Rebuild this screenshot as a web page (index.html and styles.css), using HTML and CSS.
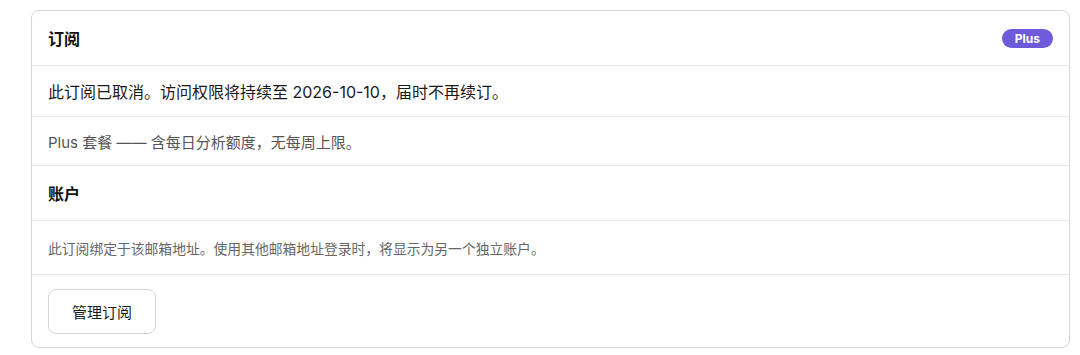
FILE: index.html
```html
<!DOCTYPE html>
<html lang="zh-CN">
<head>
    <meta charset="UTF-8">
    <meta name="viewport" content="width=device-width, initial-scale=1.0">
    <title>订阅</title>
    <link rel="stylesheet" href="styles.css">
</head>
<body>
    <div class="card">
        <div class="row row-head">
            <h2>订阅</h2>
            <span class="badge">Plus</span>
        </div>
        <div class="row row-status">
            <p>此订阅已取消。访问权限将持续至 2026-10-10，届时不再续订。</p>
        </div>
        <div class="row row-plan">
            <p>Plus 套餐 —— 含每日分析额度，无每周上限。</p>
        </div>
        <div class="row row-head">
            <h2>账户</h2>
        </div>
        <div class="row row-note">
            <p>此订阅绑定于该邮箱地址。使用其他邮箱地址登录时，将显示为另一个独立账户。</p>
        </div>
        <div class="row row-actions">
            <button class="btn">管理订阅</button>
        </div>
    </div>
</body>
</html>
```

FILE: styles.css
```css
/* General Styles */
body {
    font-family: Inter, "Noto Sans CJK SC", sans-serif;
    margin: 0;
    padding: 0;
    background: #fff;
    color: #1a1a1a;
}

.card {
    margin: 10px 10px 0 31px;
    border: 1px solid #d6d6d6;
    border-radius: 8px;
    background: #fff;
}

.row {
    display: flex;
    align-items: center;
    padding: 0 16px;
    border-top: 1px solid #e8e8e8;
}

.row:first-child {
    border-top: none;
}

.row p {
    margin: 0;
}

.row-head {
    height: 54px;
    justify-content: space-between;
}

.row-head h2 {
    margin: 0;
    font-size: 16px;
    font-weight: 600;
    color: #111;
}

.badge {
    display: inline-block;
    height: 19px;
    line-height: 19px;
    padding: 0 13px;
    border-radius: 10px;
    background: #6e5bdb;
    color: #fff;
    font-size: 12px;
    font-weight: 700;
}

.row-status {
    height: 50px;
    font-size: 16px;
    color: #1a1a1a;
}

.row-plan {
    height: 48px;
    font-size: 15px;
    color: #555;
}

.row-note {
    height: 53px;
    font-size: 13.8px;
    color: #666;
}

.row-actions {
    height: 72px;
}

.btn {
    font-family: inherit;
    height: 45px;
    width: 108px;
    font-size: 15px;
    color: #1a1a1a;
    background: #fff;
    border: 1px solid #d4d4d4;
    border-radius: 8px;
    cursor: pointer;
}

.btn:hover {
    background: #f7f7f7;
}
```
